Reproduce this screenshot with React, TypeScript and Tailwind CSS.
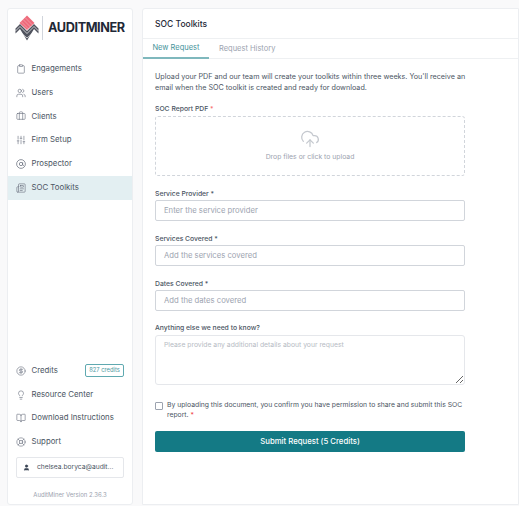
import {
  BookOpen,
  Briefcase,
  CircleDollarSign,
  Clipboard,
  CloudUpload,
  Lightbulb,
  LifeBuoy,
  Newspaper,
  SlidersVertical,
  User,
  Users,
} from 'lucide-react'

function AtCircle({ className }: { className?: string; strokeWidth?: number }) {
  return (
    <svg viewBox="0 0 24 24" fill="none" stroke="currentColor" strokeWidth="1.8" className={className}>
      <circle cx="12" cy="12" r="10.5" />
      <circle cx="12" cy="12" r="4" />
      <path d="M16 8v5.5a2.5 2.5 0 0 0 3 2" />
    </svg>
  )
}

const topNav = [
  { label: 'Engagements', icon: Clipboard },
  { label: 'Users', icon: Users },
  { label: 'Clients', icon: Briefcase },
  { label: 'Firm Setup', icon: SlidersVertical },
  { label: 'Prospector', icon: AtCircle },
  { label: 'SOC Toolkits', icon: Newspaper, active: true },
]

const bottomNav = [
  { label: 'Resource Center', icon: Lightbulb },
  { label: 'Download Instructions', icon: BookOpen },
  { label: 'Support', icon: LifeBuoy },
]

function Logo() {
  return (
    <div className="flex items-center h-[26px] pl-[7px]">
      <svg width="24" height="26" viewBox="0 0 24 26" className="shrink-0">
        <path d="M12 0.5 L19.5 8 L12 15 L4.5 8 Z" fill="#ee6b7c" />
        <path
          d="M8 4.5 L15.5 12 M10 2.5 L17.5 10 M6 6.5 L13.5 14"
          stroke="#fff"
          strokeWidth="0.5"
          opacity="0.6"
        />
        <path
          d="M0.5 13.5 L5 9 L12 16 L19 9 L23.5 13.5 L23.5 18.5 L19 14 L12 25.5 L5 14 L0.5 18.5 Z"
          fill="#50535e"
        />
        <path
          d="M0.5 16 L5 11.5 L12 18.5 L19 11.5 L23.5 16 M3 20 L5 17 L12 23 L19 17 L21 20"
          stroke="#fff"
          strokeWidth="0.7"
          fill="none"
        />
      </svg>
      <div className="w-px h-[24px] bg-gray-300 ml-[3px] mr-[5px]" />
      <span className="text-[12.7px] font-bold tracking-[-0.4px] text-[#1f2937]">AUDITMINER</span>
    </div>
  )
}

function NavRow({ label, icon: Icon, active }: { label: string; icon: typeof User | typeof AtCircle; active?: boolean }) {
  return (
    <div className={`flex items-center h-[23.8px] pl-[7.5px] text-[7.8px] text-[#4b5563] whitespace-nowrap ${active ? 'bg-[#e3eff2]' : ''}`}>
      <Icon className="w-[10px] h-[10px] text-[#6b7280] mr-[6px] shrink-0" strokeWidth={1.5} />
      <span>{label}</span>
    </div>
  )
}

function Field({ label, placeholder }: { label: string; placeholder: string }) {
  return (
    <div className="flex flex-col">
      <label className="text-[6.8px] leading-[10px] font-medium text-[#4b5563] mb-[1px]">{label}</label>
      <div className="h-[21px] border border-[#d1d5db] rounded-[2px] flex items-center pl-[8px] text-[7.7px] text-[#9ca3af]">
        {placeholder}
      </div>
    </div>
  )
}

export default function App() {
  return (
    <div
      className="flex w-[519px] h-[506px] overflow-hidden bg-[#f9f9fa] pt-[8px] pl-[7px] gap-[9px]"
      style={{ fontFamily: 'Inter, sans-serif' }}
    >
      <aside className="w-[126px] h-[497px] shrink-0 bg-white rounded-[3px] border border-[#eceef1] flex flex-col">
        <div className="pt-[6px] pb-[16px]">
          <Logo />
        </div>
        <nav className="flex flex-col">
          {topNav.map((item) => (
            <NavRow key={item.label} {...item} />
          ))}
        </nav>
        <div className="mt-auto flex flex-col">
          <div className="flex items-center h-[23.8px] pl-[7.5px] pr-[8px] text-[7.8px] text-[#4b5563]">
            <CircleDollarSign className="w-[10px] h-[10px] text-[#6b7280] mr-[6px]" strokeWidth={1.5} />
            <span>Credits</span>
            <span className="ml-auto border border-[#5fa9b0] rounded-[2px] w-[39px] h-[13px] flex items-center justify-center whitespace-nowrap text-[5.8px] text-[#4f9aa3]">
              827 credits
            </span>
          </div>
          {bottomNav.map((item) => (
            <NavRow key={item.label} {...item} />
          ))}
          <div className="mx-[8px] mt-[3px] h-[21px] border border-[#e5e7eb] rounded-[2px] flex items-center pl-[6px] text-[6.7px] text-[#4b5563] whitespace-nowrap">
            <User className="w-[7px] h-[7px] text-[#374151] mr-[7px]" fill="#374151" />
            <span>chelsea.boryca@audit...</span>
          </div>
          <div className="h-[26px] pt-[6px] flex items-center justify-center text-[6px] text-[#9ca3af]">AuditMiner Version 2.36.3</div>
        </div>
      </aside>

      <main className="flex-1 h-[497px] bg-white rounded-tl-[3px] border border-[#eceef1] flex flex-col">
        <div className="h-[30px] pt-[1px] border-b border-[#eef0f2] flex items-center pl-[12px] text-[8.5px] font-medium text-[#1f2937]">
          SOC Toolkits
        </div>
        <div className="flex h-[20px] border-b border-[#eef0f2] text-[7.5px]">
          <div className="w-[66px] h-[20px] border-b-2 border-[#7fb8bd] flex items-center justify-center text-[#46939b]">New Request</div>
          <div className="ml-[10px] flex items-center text-[#9ca3af]">Request History</div>
        </div>
        <div className="flex flex-col w-[310px] ml-[12px] pt-[12px]">
          <p className="-mr-[6px] text-[7.2px] leading-[11px] text-[#4b5563]">
            Upload your PDF and our team will create your toolkits within three weeks. You'll receive an email when the SOC toolkit is created and ready for download.
          </p>
          <label className="mt-[11px] mb-[2px] text-[6.8px] leading-[10px] font-medium text-[#4b5563]">
            SOC Report PDF <span className="text-[#f87171]">*</span>
          </label>
          <div className="h-[60px] border border-dashed border-[#d1d5db] rounded-[3px] flex flex-col items-center justify-center">
            <CloudUpload className="w-[20px] h-[20px] text-[#c4c8ce]" strokeWidth={1.5} />
            <span className="mt-[3px] text-[6.85px] text-[#9ca3af]">Drop files or click to upload</span>
          </div>
          <div className="flex flex-col gap-[13px] mt-[13px]">
            <Field label="Service Provider *" placeholder="Enter the service provider" />
            <Field label="Services Covered *" placeholder="Add the services covered" />
            <Field label="Dates Covered *" placeholder="Add the dates covered" />
          </div>
          <label className="mt-[12px] mb-[2px] text-[6.8px] leading-[10px] font-medium text-[#4b5563]">Anything else we need to know?</label>
          <textarea
            readOnly
            placeholder="Please provide any additional details about your request"
            className="h-[50px] border border-[#e5e7eb] rounded-[3px] pl-[8px] pt-[4px] text-[6.8px] placeholder:text-[#b6bbc3] outline-none"
          />
          <div className="flex mt-[15px]">
            <span className="w-[8px] h-[8px] mt-[2px] border border-[#9ca3af] rounded-[1px] shrink-0" />
            <p className="ml-[4px] text-[6.8px] leading-[10px] text-[#4b5563]">
              By uploading this document, you confirm you have permission to share and submit this SOC report. <span className="text-[#ef4444]">*</span>
            </p>
          </div>
          <button type="button" className="mt-[11px] h-[21px] rounded-[2px] bg-[#147a85] text-white text-[7.75px] font-medium">
            Submit Request (5 Credits)
          </button>
        </div>
      </main>
    </div>
  )
}
